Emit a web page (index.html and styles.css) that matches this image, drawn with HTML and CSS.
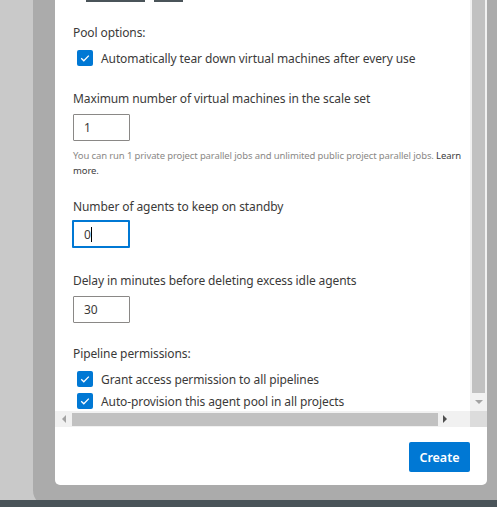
FILE: index.html
```html
<!DOCTYPE html>
<html>
<head>
<meta charset="utf-8">
<link rel="stylesheet" href="styles.css">
</head>
<body>
<div class="page">
  <div class="stage">
    <div class="dialog">
      <div class="scroll-area">
        <div class="content">
          <div class="clipped-links"><span class="bar bar-a"></span><span class="bar bar-b"></span></div>
          <div class="label group-title">Pool options:</div>
          <div class="check-row first-check"><span class="checkbox"><svg viewBox="0 0 16 16" width="16" height="16"><path d="M4.2 8.3 L6.8 10.8 L11.8 5.6" fill="none" stroke="#fff" stroke-width="1.3"/></svg></span><span class="check-label">Automatically tear down virtual machines after every use</span></div>

          <div class="label field-label l-max">Maximum number of virtual machines in the scale set</div>
          <div class="input">1</div>
          <p class="helper">You can run 1 private project parallel jobs and unlimited public project parallel jobs. <a class="link">Learn more.</a></p>

          <div class="label field-label l-standby">Number of agents to keep on standby</div>
          <div class="input focused">0<span class="caret"></span></div>

          <div class="label field-label l-delay">Delay in minutes before deleting excess idle agents</div>
          <div class="input">30</div>

          <div class="label group-title l-perm">Pipeline permissions:</div>
          <div class="check-row first-check"><span class="checkbox"><svg viewBox="0 0 16 16" width="16" height="16"><path d="M4.2 8.3 L6.8 10.8 L11.8 5.6" fill="none" stroke="#fff" stroke-width="1.3"/></svg></span><span class="check-label">Grant access permission to all pipelines</span></div>
          <div class="check-row second-check"><span class="checkbox"><svg viewBox="0 0 16 16" width="16" height="16"><path d="M4.2 8.3 L6.8 10.8 L11.8 5.6" fill="none" stroke="#fff" stroke-width="1.3"/></svg></span><span class="check-label">Auto-provision this agent pool in all projects</span></div>
        </div>
        <div class="vscroll">
          <div class="vthumb"></div>
          <div class="varrow"><svg viewBox="0 0 8 4" width="8" height="4"><path d="M0 0 L8 0 L4 4 Z" fill="#a3a3a3"/></svg></div>
        </div>
        <div class="hscroll">
          <div class="harrow"><svg viewBox="0 0 4 8" width="4" height="8"><path d="M4 0 L4 8 L0 4 Z" fill="#a3a3a3"/></svg></div>
          <div class="hthumb"></div>
          <div class="harrow right"><svg viewBox="0 0 4 8" width="4" height="8"><path d="M0 0 L0 8 L4 4 Z" fill="#505050"/></svg></div>
        </div>
        <div class="corner"></div>
      </div>
      <div class="footer">
        <button class="primary">Create</button>
      </div>
    </div>
  </div>
  <div class="taskbar"></div>
</div>
</body>
</html>
```
FILE: styles.css
```css
* { box-sizing: border-box; }
html, body { margin: 0; padding: 0; }
body {
  width: 497px;
  height: 507px;
  overflow: hidden;
  background: #c9c9c9;
  font-family: "Noto Sans", "Open Sans", sans-serif;
  color: #3b3a39;
}
.page {
  display: flex;
  flex-direction: column;
  height: 507px;
}
.stage {
  flex: 1;
  padding-left: 55px;
  overflow: hidden;
}
.dialog {
  width: 432px;
  height: 485px;
  background: #fff;
  border-radius: 0 0 5px 5px;
  box-shadow: 0 0 0 22px #ababab;
  display: flex;
  flex-direction: column;
  overflow: hidden;
}
.taskbar {
  height: 7px;
  background: #4a5459;
}
.scroll-area {
  display: grid;
  grid-template-columns: 415px 17px;
  grid-template-rows: 411px 16px;
}
.content {
  padding-left: 18px;
  overflow: hidden;
  font-size: 12px;
  letter-spacing: -0.1px;
}
.clipped-links {
  display: flex;
  gap: 9px;
  padding-left: 13px;
  height: 2px;
}
.bar { height: 1.5px; background: #4a5459; display: block; }
.bar-a { width: 59px; }
.bar-b { width: 29px; }
.label {
  line-height: 20px;
  height: 20px;
  white-space: nowrap;
}
.group-title { margin-top: 21px; }
.l-perm { margin-top: 21px; }
.field-label { margin-top: 21px; }
.l-standby { margin-top: 19px; }
.l-delay { margin-top: 23px; }
.check-row {
  display: flex;
  align-items: center;
  height: 20px;
  padding-left: 4px;
  white-space: nowrap;
}
.first-check { margin-top: 5px; }
.second-check { margin-top: 2px; }
.checkbox {
  width: 16px;
  height: 16px;
  background: #0078d4;
  border-radius: 2px;
  display: flex;
  margin-right: 8px;
}
.checkbox svg { display: block; }
.input {
  margin-top: 5px;
  width: 57px;
  height: 27px;
  border: 1px solid #8a8886;
  border-radius: 1px;
  padding-left: 10px;
  line-height: 25px;
  font-size: 12px;
  display: flex;
  align-items: center;
}
.input.focused {
  margin-top: 3px;
  margin-left: -1px;
  width: 58px;
  height: 28px;
  border: 2px solid #0078d4;
  padding-left: 10px;
}
.caret {
  display: inline-block;
  width: 1px;
  height: 15px;
  background: #000;
}
.helper {
  margin: 7px 0 0;
  font-size: 9.5px;
  letter-spacing: -0.12px;
  line-height: 15px;
  height: 30px;
  color: #8a8886;
  width: 396px;
}
.helper .link { color: #3c3c3c; text-decoration: none; }
.vscroll {
  background: #f1f1f1;
  padding: 0 2px;
  display: flex;
  flex-direction: column;
  align-items: center;
}
.vthumb {
  width: 13px;
  height: 393px;
  background: #c1c1c1;
}
.varrow { margin-top: 7px; height: 4px; }
.varrow svg { display: block; }
.hscroll {
  background: #f1f1f1;
  display: flex;
  align-items: center;
  padding: 0 5px;
}
.harrow { width: 7px; height: 8px; display: flex; align-items: center; }
.harrow svg { display: block; margin-left: 2px; }
.harrow.right svg { margin-left: 1px; }
.hthumb {
  width: 366px;
  height: 13px;
  background: #c1c1c1;
  margin: 0 4px 0 5px;
}
.corner { background: #dcdcdc; }
.footer {
  flex: 1;
  display: flex;
  justify-content: flex-end;
  align-items: flex-start;
  padding: 15px 17px 0 0;
}
.primary {
  width: 61px;
  height: 30px;
  background: #0078d4;
  color: #fff;
  border: none;
  border-radius: 2px;
  font-family: inherit;
  font-size: 12.5px;
  font-weight: 600;
  padding: 0;
}
```
